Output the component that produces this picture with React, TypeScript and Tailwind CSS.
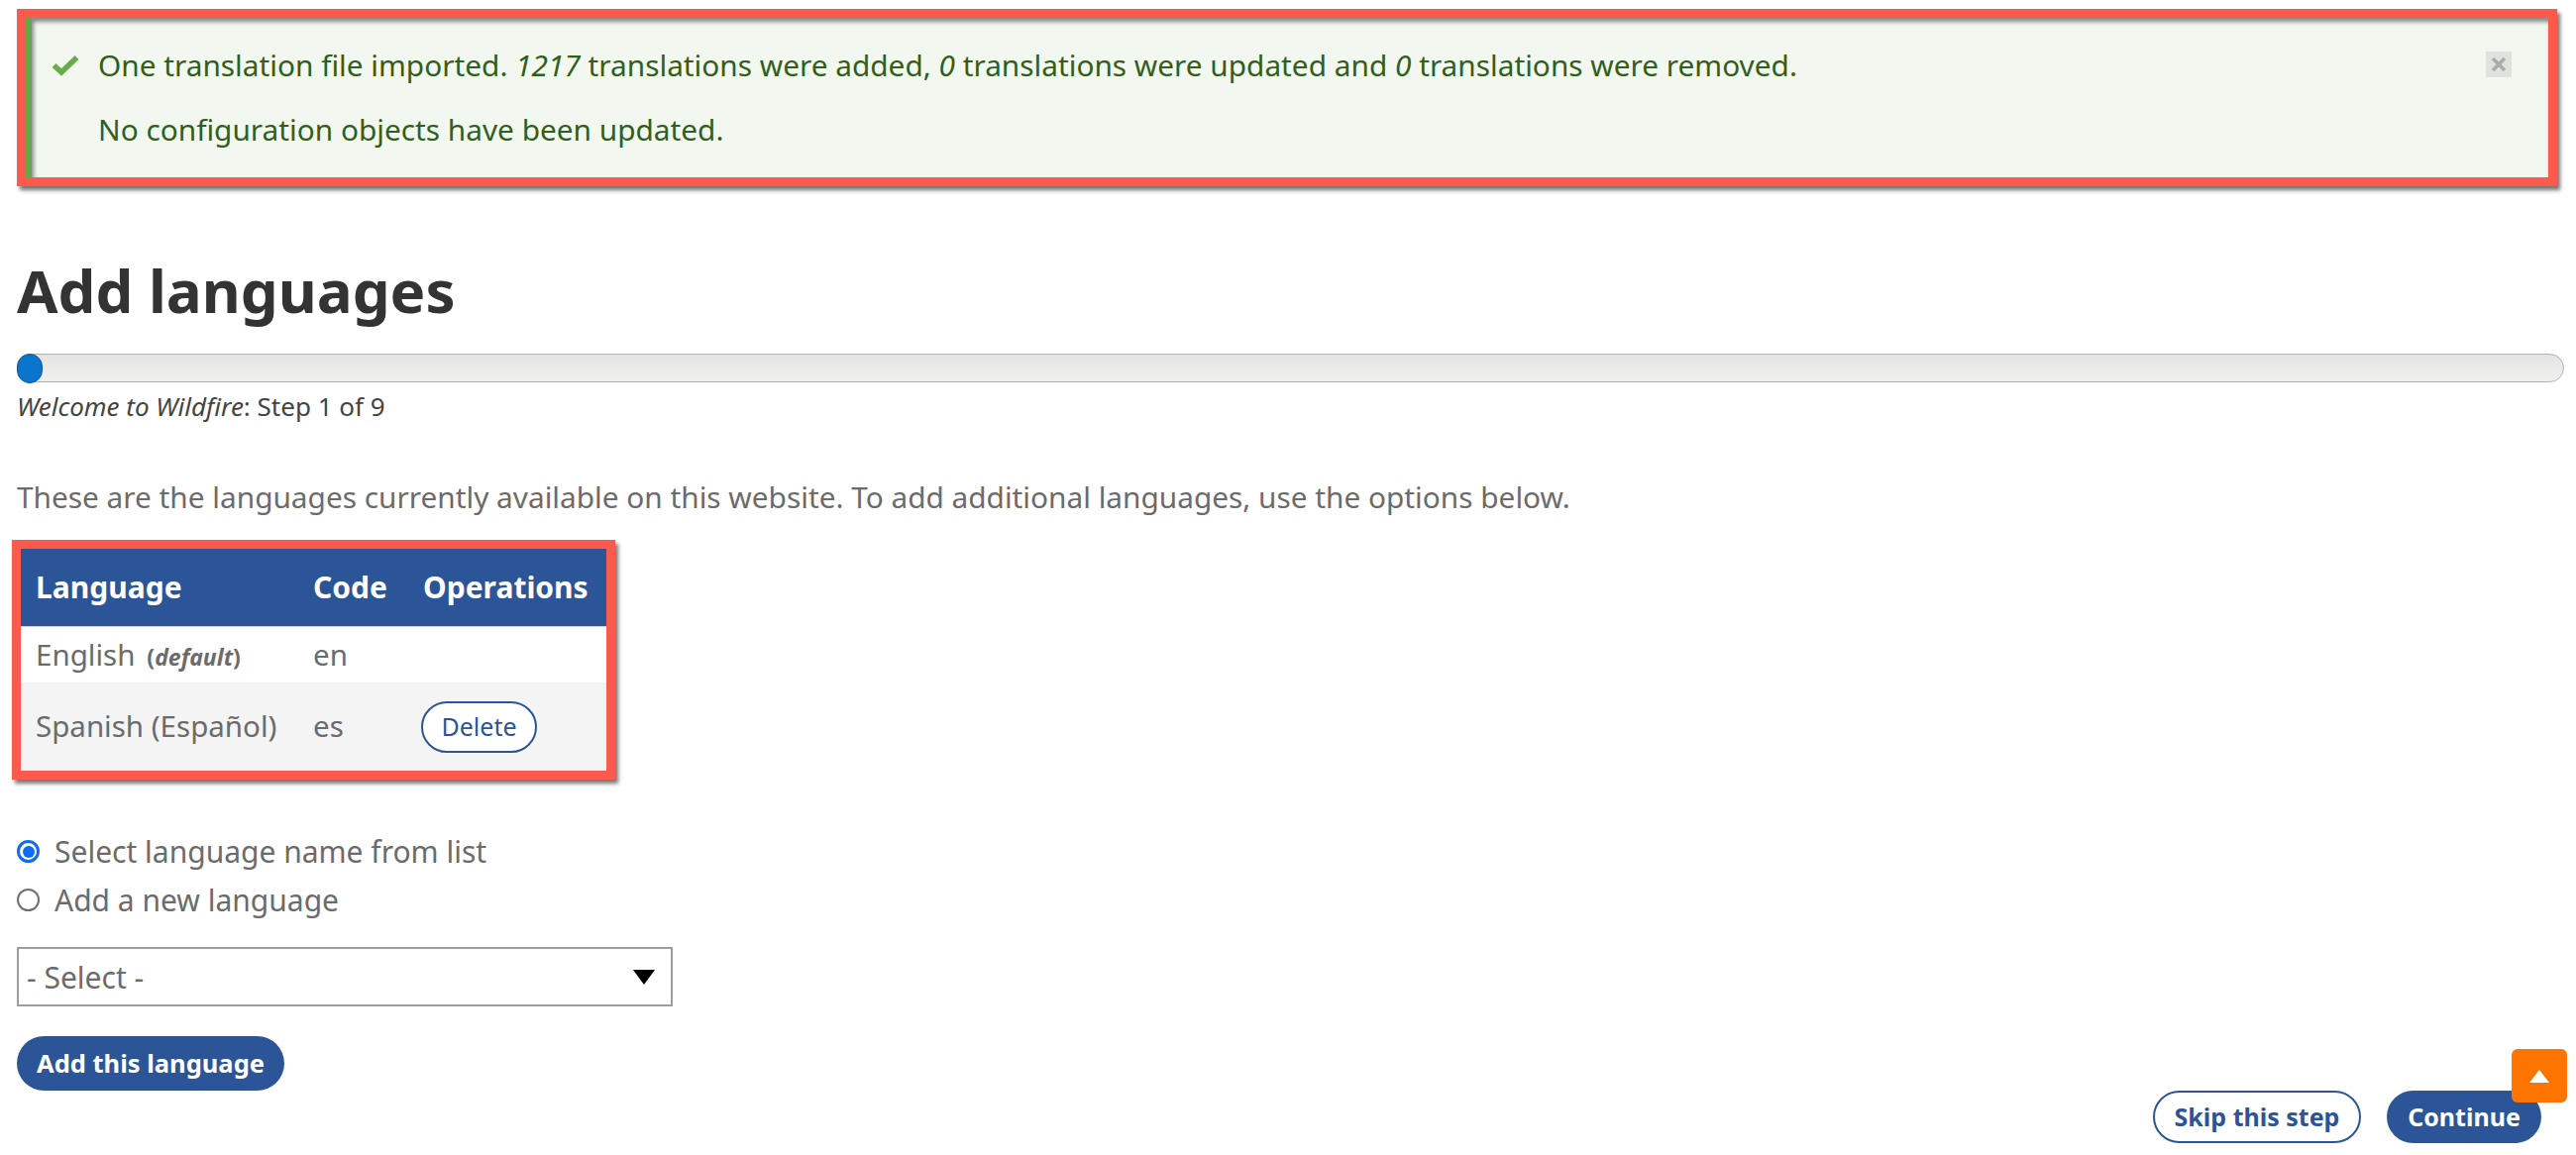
import React from "react";

function Check() {
  return (
    <svg width="28" height="22" viewBox="0 0 28 22" className="shrink-0">
      <path d="M2.5 11 L10 18 L25.5 3" fill="none" stroke="#66ad4a" strokeWidth="5.5" strokeLinecap="butt" />
    </svg>
  );
}

export default function App() {
  return (
    <div
      className="relative w-[2600px] h-[1166px] overflow-hidden bg-white pl-[17px] pr-[12px] text-[#6b6b6b]"
      style={{ fontFamily: '"Noto Sans", sans-serif' }}
    >
      {/* Alert with red annotation */}
      <div className="mt-[9px] h-[179px] w-[2564px] border-[9px] border-[#fc5a4c] shadow-[3px_4px_4px_rgba(0,0,0,0.55)]">
        <div className="relative h-full bg-[#f2f8ef] border-l-[6px] border-[#62a847] shadow-[inset_2px_4px_4px_rgba(0,0,0,0.45)] pl-[20px] pt-[30px] text-[#325e1c] text-[30px] leading-[36px]">
          <div className="flex items-center gap-[19px]">
            <Check />
            <p className="text-[29.8px]">
              One translation file imported. <em>1217</em> translations were added, <em>0</em> translations were updated and{" "}
              <em>0</em> translations were removed.
            </p>
          </div>
          <p className="mt-[29px] pl-[47px] text-[29.8px]">No configuration objects have been updated.</p>
          <div className="absolute right-[37px] top-[34px] w-[26px] h-[26px] bg-[#dfe3dd] flex items-center justify-center">
            <svg width="16" height="16" viewBox="0 0 16 16">
              <path d="M2 2 L14 14 M14 2 L2 14" stroke="#a9aca7" strokeWidth="3.5" />
            </svg>
          </div>
        </div>
      </div>

      <h1 className="mt-[69px] text-[60px] leading-[72px] font-bold text-[#333]">Add languages</h1>

      {/* Progress */}
      <div className="mt-[28px] h-[29px] w-full rounded-full border-[1.5px] border-[#b2b2b2] bg-gradient-to-b from-[#e4e4e2] to-[#efefed] relative">
        <div className="absolute -left-[1px] -top-[1.5px] w-[26px] h-[30px] rounded-full bg-[#0b74cb] border border-[#0a5a9e]" />
      </div>

      <p className="mt-[8px] text-[26px] leading-[32px] text-[#444]">
        <em>Welcome to Wildfire</em>: Step 1 of 9
      </p>

      <p className="mt-[58px] text-[29.8px] leading-[36px]">
        These are the languages currently available on this website. To add additional languages, use the options below.
      </p>

      {/* Table with annotation */}
      <div className="mt-[25px] -ml-[5px] w-[609px] border-[9px] border-[#fc5a4c] shadow-[3px_4px_4px_rgba(0,0,0,0.55)]">
        <div className="shadow-[inset_3px_4px_4px_rgba(0,0,0,0.4)]">
          <table className="w-[591px] table-fixed border-collapse text-[29.5px]">
            <colgroup>
              <col className="w-[277px]" />
              <col className="w-[111px]" />
              <col className="w-[203px]" />
            </colgroup>
            <thead>
              <tr className="h-[78px] bg-[#2b5597] text-white text-[30px]">
                <th className="pl-[15px] text-left font-bold">Language</th>
                <th className="pl-[18px] text-left font-bold">Code</th>
                <th className="pl-[18px] text-left font-bold">Operations</th>
              </tr>
            </thead>
            <tbody>
              <tr className="h-[57px] bg-white border-t border-[#c9d4e6]">
                <td className="pl-[15px] whitespace-nowrap">
                  English
                  <span className="ml-[12px] text-[23px] font-bold">
                    (<em>default</em>)
                  </span>
                </td>
                <td className="pl-[18px]">en</td>
                <td />
              </tr>
              <tr className="h-[89px] bg-[#f4f4f4]">
                <td className="pl-[15px] whitespace-nowrap">Spanish (Español)</td>
                <td className="pl-[18px]">es</td>
                <td className="pl-[16px]">
                  <span className="inline-flex items-center justify-center w-[117px] h-[52px] rounded-full border-2 border-[#2b5597] bg-white text-[#2b5597] text-[25px]">
                    Delete
                  </span>
                </td>
              </tr>
            </tbody>
          </table>
        </div>
      </div>

      {/* Radios */}
      <div className="mt-[48px] text-[30px] leading-[49px]">
        <div className="flex items-center gap-[15px]">
          <span className="w-[23px] h-[23px] rounded-full border-[3px] border-[#0e6cf2] flex items-center justify-center">
            <span className="w-[12px] h-[12px] rounded-full bg-[#0e6cf2]" />
          </span>
          <span>Select language name from list</span>
        </div>
        <div className="flex items-center gap-[15px]">
          <span className="w-[23px] h-[23px] rounded-full border-[2px] border-[#6f6f6f]" />
          <span>Add a new language</span>
        </div>
      </div>

      {/* Select */}
      <div className="mt-[23px] w-[662px] h-[60px] border-2 border-[#9c9c9c] flex items-center justify-between pl-[8px] pr-[16px] text-[30px]">
        <span>- Select -</span>
        <svg width="22" height="15" viewBox="0 0 22 15">
          <polygon points="0,0 22,0 11,15" fill="#000" />
        </svg>
      </div>

      <button className="mt-[30px] w-[270px] h-[55px] rounded-full bg-[#2b5597] text-white font-bold text-[25.5px] flex items-center justify-center">
        Add this language
      </button>

      {/* Actions */}
      <div className="flex justify-end gap-[26px] pr-[23px]">
        <button className="w-[210px] h-[53px] rounded-full border-2 border-[#2b5597] bg-white text-[#2b5597] font-bold text-[25px] flex items-center justify-center">
          Skip this step
        </button>
        <button className="w-[156px] h-[53px] rounded-full bg-[#2b5597] text-white font-bold text-[25px] flex items-center justify-center">
          Continue
        </button>
      </div>

      {/* Back to top */}
      <div className="absolute left-[2535px] top-[1059px] w-[56px] h-[54px] rounded-[6px] bg-[#fe7400] flex items-center justify-center">
        <svg width="20" height="13" viewBox="0 0 20 13">
          <polygon points="10,0 20,13 0,13" fill="#fff" />
        </svg>
      </div>
    </div>
  );
}
